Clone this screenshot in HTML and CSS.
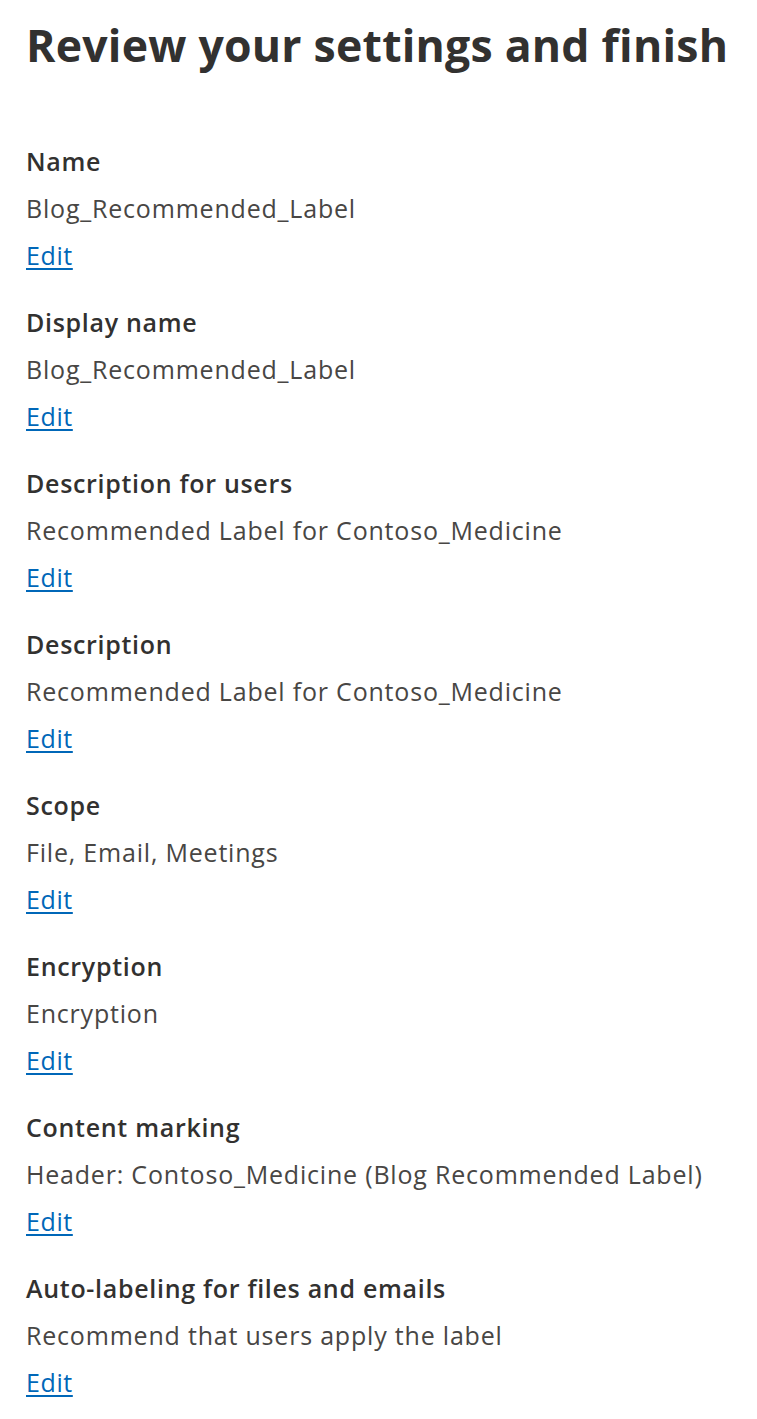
FILE: index.html
```html
<!DOCTYPE html>
<html lang="en">
<head>
<meta charset="utf-8">
<title>Review your settings and finish</title>
<link rel="stylesheet" href="styles.css">
</head>
<body>
<main class="page">
  <h1 class="title">Review your settings and finish</h1>
  <div class="sections">
    <section class="item">
      <h2 class="label">Name</h2>
      <p class="value">Blog_Recommended_Label</p>
      <a class="edit" href="#">Edit</a>
    </section>
    <section class="item">
      <h2 class="label">Display name</h2>
      <p class="value">Blog_Recommended_Label</p>
      <a class="edit" href="#">Edit</a>
    </section>
    <section class="item">
      <h2 class="label">Description for users</h2>
      <p class="value">Recommended Label for Contoso_Medicine</p>
      <a class="edit" href="#">Edit</a>
    </section>
    <section class="item">
      <h2 class="label">Description</h2>
      <p class="value">Recommended Label for Contoso_Medicine</p>
      <a class="edit" href="#">Edit</a>
    </section>
    <section class="item">
      <h2 class="label">Scope</h2>
      <p class="value">File, Email, Meetings</p>
      <a class="edit" href="#">Edit</a>
    </section>
    <section class="item">
      <h2 class="label">Encryption</h2>
      <p class="value">Encryption</p>
      <a class="edit" href="#">Edit</a>
    </section>
    <section class="item">
      <h2 class="label">Content marking</h2>
      <p class="value">Header: Contoso_Medicine (Blog Recommended Label)</p>
      <a class="edit" href="#">Edit</a>
    </section>
    <section class="item">
      <h2 class="label">Auto-labeling for files and emails</h2>
      <p class="value">Recommend that users apply the label</p>
      <a class="edit" href="#">Edit</a>
    </section>
  </div>
</main>
</body>
</html>
```
FILE: styles.css
```css
html, body {
  margin: 0;
  padding: 0;
  background: #ffffff;
}
body {
  font-family: "Segoe UI", "Open Sans", "Noto Sans", "Liberation Sans", sans-serif;
  color: #323130;
}
.page {
  padding: 15px 26px 0 26px;
}
.title {
  margin: 0;
  font-size: 44.6px;
  line-height: 60px;
  font-weight: 700;
  letter-spacing: 0.22px;
  color: #323130;
  white-space: nowrap;
}
.sections {
  display: flex;
  flex-direction: column;
  gap: 20px;
  margin-top: 63px;
}
.item {
  display: flex;
  flex-direction: column;
  align-items: flex-start;
}
.label {
  margin: 0;
  font-size: 25px;
  line-height: 47px;
  font-weight: 600;
  letter-spacing: 0.7px;
  color: #323130;
}
.value {
  margin: 0;
  font-size: 25px;
  line-height: 47px;
  font-weight: 400;
  letter-spacing: 0.8px;
  color: #484644;
}
.edit {
  font-size: 25px;
  line-height: 47px;
  letter-spacing: 0.6px;
  color: #0067b8;
  text-decoration: underline;
  text-underline-offset: 3px;
}
```
